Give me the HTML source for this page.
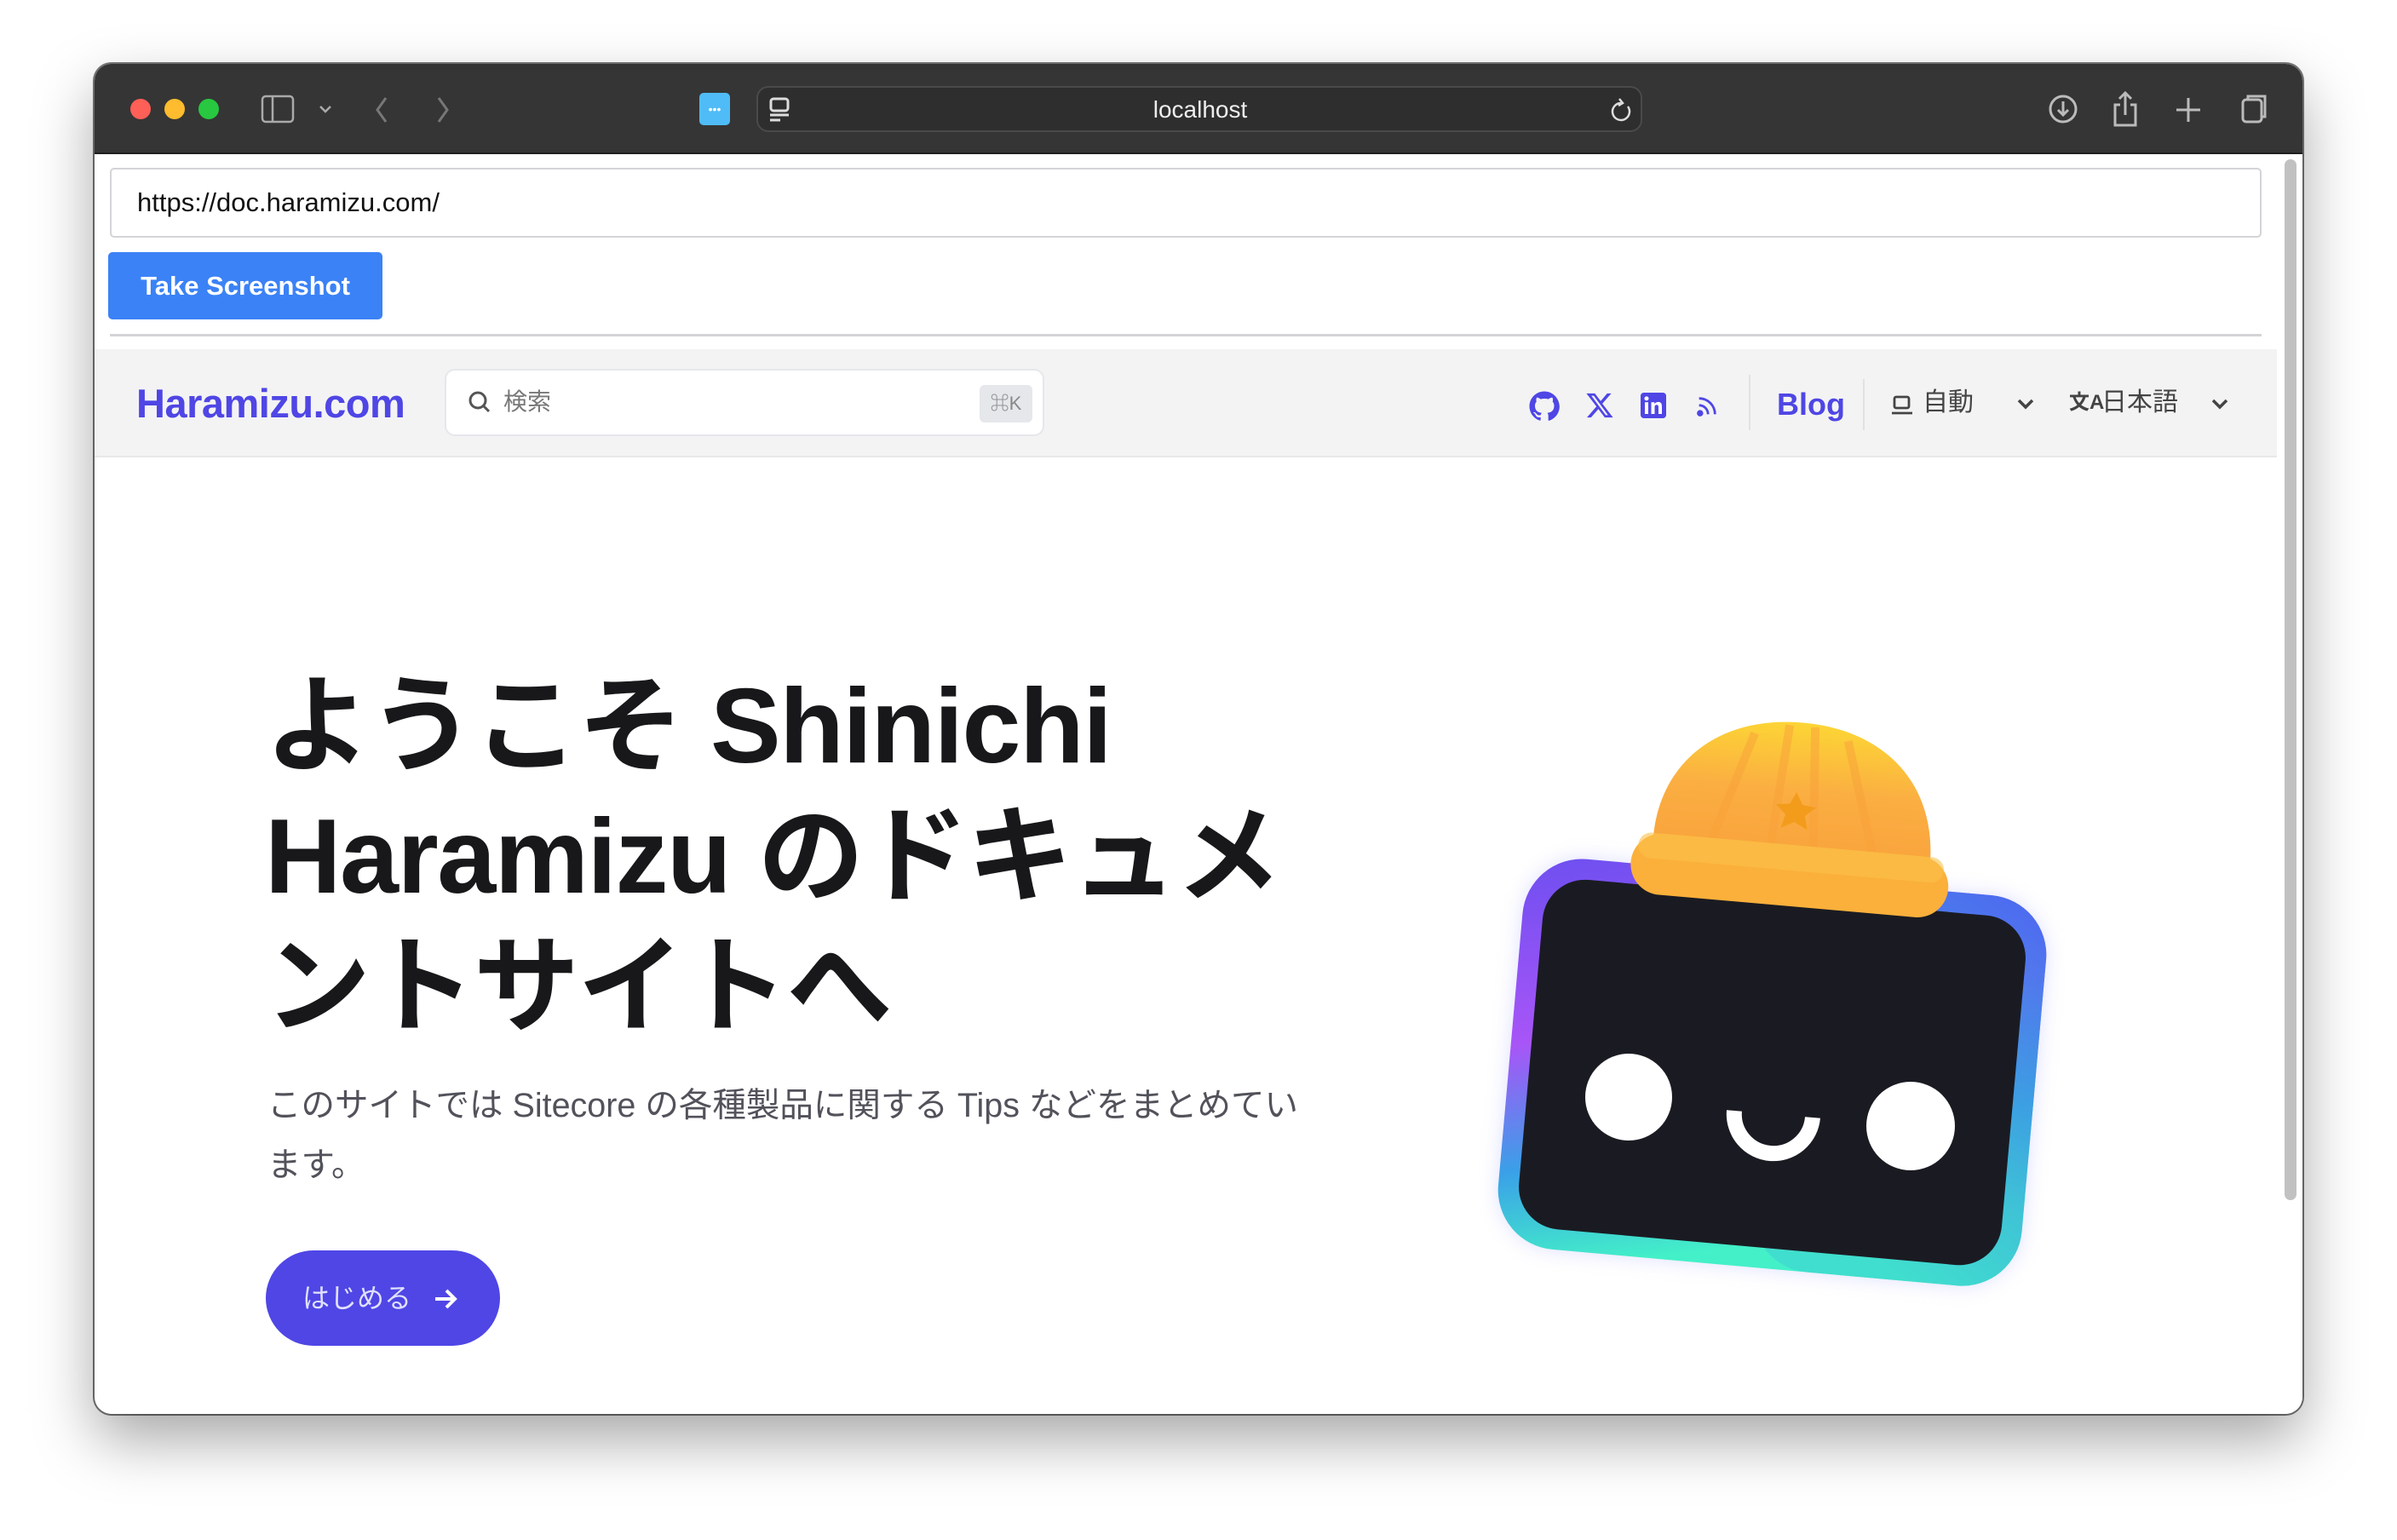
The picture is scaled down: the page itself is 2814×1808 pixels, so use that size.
<!DOCTYPE html>
<html><head><meta charset="utf-8"><style>
*{margin:0;padding:0;box-sizing:border-box}
body{width:2814px;height:1808px;background:#fff;position:relative;overflow:hidden;font-family:"Liberation Sans","Noto Sans CJK JP",sans-serif}
.abs{position:absolute}
#win{left:111px;top:75px;width:2592px;height:1585px;border-radius:20px;background:#fff;box-shadow:0 30px 70px rgba(0,0,0,.35),0 0 0 2px #777;overflow:hidden}
#tb{left:0;top:0;width:2592px;height:106px;background:#353535;border-bottom:2px solid #1e1e1e}
.tl{width:24px;height:24px;border-radius:50%;top:41px}
.jp{font-family:"Liberation Sans","Noto Sans CJK JP",sans-serif}
</style></head><body>
<div id="win" class="abs">
 <div id="tb" class="abs">
  <div class="abs tl" style="left:42px;background:#fe5f57"></div>
  <div class="abs tl" style="left:82px;background:#febc2e"></div>
  <div class="abs tl" style="left:122px;background:#28c840"></div>
  <svg class="abs" style="left:195px;top:36px" width="120" height="36" viewBox="0 0 120 36" fill="none" stroke="#aaa" stroke-width="2.5">
   <rect x="2" y="2" width="36" height="30" rx="4"/><line x1="14" y1="2" x2="14" y2="32"/>
   <path d="M70 14l6 6 6-6"/>
  </svg>
  <svg class="abs" style="left:320px;top:36px" width="100" height="36" fill="none" stroke="#777" stroke-width="3"><path d="M22 4L12 18l10 14"/><path d="M84 4l10 14-10 14"/></svg>
  <div class="abs" style="left:710px;top:34px;width:36px;height:38px;background:#4fbcf7;border-radius:5px;color:#fff;font-size:14px;text-align:center;line-height:38px">•••</div>
  <div class="abs" style="left:777px;top:26px;width:1040px;height:54px;border:2px solid #4a4a4a;border-radius:14px;background:#2e2e2e"></div>
  <svg class="abs" style="left:790px;top:38px" width="30" height="32" fill="none" stroke="#ddd" stroke-width="3"><rect x="4" y="3" width="20" height="14" rx="3"/><line x1="3" y1="22" x2="25" y2="22"/><line x1="3" y1="28" x2="15" y2="28"/></svg>
  <div class="abs" style="left:1198px;top:38px;width:200px;text-align:center;color:#eee;font-size:28px;line-height:32px">localhost</div>
  <svg class="abs" style="left:1778px;top:38px" width="30" height="32" fill="none" stroke="#ddd" stroke-width="2.5"><path d="M22 12a10 10 0 1 1-8-4"/><path d="M12 3l4 5-5 3"/></svg>
  <svg class="abs" style="left:2290px;top:30px" width="280" height="46" fill="none" stroke="#bbb" stroke-width="3">
   <circle cx="21" cy="23" r="15"/><path d="M21 14v16M15 24l6 6 6-6"/>
   <path d="M88 18h-6v24h24V18h-6M94 30V4M87 11l7-7 7 7"/>
   <path d="M168 10v28M154 24h28"/>
   <rect x="232" y="12" width="22" height="26" rx="4"/><path d="M238 12V8h20v24h-4"/>
  </svg>
 </div>
 <div class="abs" style="left:18px;top:122px;width:2526px;height:82px;border:2px solid #d4d4d8;border-radius:5px"></div>
 <div class="abs" style="left:50px;top:143px;font-size:31px;color:#111;line-height:40px">https://doc.haramizu.com/</div>
 <div class="abs" style="left:16px;top:221px;width:322px;height:79px;background:#3b82f6;border-radius:5px;color:#fff;font-size:31px;font-weight:bold;text-align:center;line-height:79px">Take Screenshot</div>
 <div class="abs" style="left:18px;top:317px;width:2526px;height:3px;background:#d4d4d8"></div>
 <div class="abs" style="left:2570px;top:110px;width:22px;height:1475px;background:#fff"></div>
 <div class="abs" style="left:2571px;top:112px;width:14px;height:1222px;background:#c1c1c1;border-radius:7px"></div>
 <div class="abs" style="left:0;top:335px;width:2562px;height:127px;background:#f3f3f4;border-bottom:2px solid #e8e8ea"></div>
 <div class="abs" style="left:49px;top:371px;font-size:47px;font-weight:bold;color:#4f46e5;line-height:56px;letter-spacing:-0.5px">Haramizu.com</div>
 <div class="abs" style="left:411px;top:358px;width:704px;height:79px;background:#fff;border:2px solid #e5e7eb;border-radius:12px"></div>
 <svg class="abs" style="left:437px;top:382px" width="30" height="32" fill="none" stroke="#555" stroke-width="3"><circle cx="13" cy="13" r="9"/><path d="M20 20l6 6"/></svg>
 <div class="abs jp" style="left:480px;top:380px;font-size:28px;color:#777;line-height:34px">検索</div>
 <div class="abs" style="left:1039px;top:377px;width:62px;height:44px;background:#e5e7eb;border-radius:6px;color:#888;font-size:22px;text-align:center;line-height:44px">⌘K</div>
 <svg class="abs" style="left:1682px;top:382px" width="40" height="40" viewBox="0 0 24 24" fill="#4f46e5"><path d="M12 1.5C6.2 1.5 1.5 6.2 1.5 12c0 4.6 3 8.6 7.2 10 .5.1.7-.2.7-.5v-1.8c-2.9.6-3.5-1.4-3.5-1.4-.5-1.2-1.2-1.5-1.2-1.5-1-.7.1-.7.1-.7 1 .1 1.6 1.1 1.6 1.1.9 1.6 2.5 1.1 3.1.9.1-.7.4-1.1.7-1.4-2.3-.3-4.8-1.2-4.8-5.2 0-1.100.4-2.1 1.1-2.8-.1-.3-.5-1.4.1-2.8 0 0 .9-.3 2.9 1.1a10 10 0 0 1 5.3 0c2-1.4 2.9-1.1 2.9-1.1.6 1.4.2 2.5.1 2.8.7.7 1.1 1.7 1.1 2.8 0 4-2.5 4.9-4.8 5.2.4.3.7 1 .7 2v2.9c0 .3.2.6.7.5 4.2-1.4 7.2-5.4 7.2-10C22.5 6.2 17.8 1.5 12 1.5z"/></svg>
 <svg class="abs" style="left:1750px;top:384px" width="34" height="34" viewBox="0 0 24 24" fill="#4f46e5"><path d="M18.2 2h3.4l-7.4 8.5L23 22h-6.8l-5.3-7-6.1 7H1.4l7.9-9.1L1 2h7l4.8 6.4L18.2 2zm-1.2 18h1.9L7.1 4H5.1l11.9 16z"/></svg>
 <svg class="abs" style="left:1815px;top:386px" width="30" height="30" viewBox="0 0 24 24"><rect width="24" height="24" rx="3" fill="#4f46e5"/><rect x="4" y="9" width="3.2" height="11" fill="#fff"/><circle cx="5.6" cy="5.5" r="2" fill="#fff"/><path d="M10 9h3v1.6c.6-1 1.8-1.9 3.5-1.9 3 0 3.5 2 3.5 4.5V20h-3.2v-6c0-1.4-.2-2.6-1.7-2.6s-1.900 1.1-1.9 2.6v6H10z" fill="#fff"/></svg>
 <svg class="abs" style="left:1879px;top:387px" width="28" height="30" viewBox="0 0 24 24" fill="none" stroke="#4f46e5" stroke-width="2.4"><circle cx="5" cy="19" r="2" fill="#4f46e5"/><path d="M4 11a9 9 0 0 1 9 9M4 4a16 16 0 0 1 16 16"/></svg>
 <div class="abs" style="left:1942px;top:365px;width:2px;height:65px;background:#e2e2e4"></div>
 <div class="abs" style="left:1975px;top:378px;font-size:36px;font-weight:bold;color:#4f46e5;line-height:44px">Blog</div>
 <div class="abs" style="left:2076px;top:370px;width:2px;height:60px;background:#e2e2e4"></div>
 <svg class="abs" style="left:2108px;top:388px" width="28" height="26" fill="none" stroke="#444" stroke-width="2.8"><rect x="5" y="3" width="17" height="13" rx="2"/><path d="M2 22h24"/></svg>
 <div class="abs jp" style="left:2146px;top:378px;font-size:30px;color:#444;line-height:40px">自動</div>
 <svg class="abs" style="left:2256px;top:390px" width="22" height="20" fill="none" stroke="#444" stroke-width="3.5"><path d="M3 5l8 8 8-8"/></svg>
 <div class="abs jp" style="left:2318px;top:380px;font-size:24px;color:#444;line-height:36px;font-weight:bold">文A</div>
 <div class="abs jp" style="left:2356px;top:378px;font-size:30px;color:#444;line-height:40px">日本語</div>
 <svg class="abs" style="left:2484px;top:390px" width="22" height="20" fill="none" stroke="#444" stroke-width="3.5"><path d="M3 5l8 8 8-8"/></svg>
 <div class="abs jp" style="left:200px;top:702px;font-size:124px;font-weight:bold;color:#18181b;line-height:153px;white-space:nowrap;letter-spacing:-1.5px">ようこそ Shinichi<br>Haramizu のドキュメ<br>ントサイトへ</div>
 <div class="abs jp" style="left:203px;top:1188px;font-size:39.5px;color:#52525b;line-height:70px;white-space:nowrap">このサイトでは Sitecore の各種製品に関する Tips などをまとめてい<br>ます。</div>
 <div class="abs jp" style="left:201px;top:1393px;width:275px;height:112px;border-radius:56px;background:#4f46e5;color:#e0e0ff;font-size:32px;line-height:112px;padding-left:43px">はじめる</div>
 <svg class="abs" style="left:398px;top:1437px" width="30" height="26" fill="none" stroke="#fff" stroke-width="4"><path d="M2 13h24M15 3l10 10-10 10"/></svg>
 <svg class="abs" style="left:1609px;top:745px" width="720" height="720" viewBox="0 0 720 720">
  <defs>
   <linearGradient id="fr" x1="0" y1="0" x2="0.3" y2="1"><stop offset="0" stop-color="#6d4ff0"/><stop offset=".45" stop-color="#a855f7"/><stop offset=".75" stop-color="#3aa0e8"/><stop offset="1" stop-color="#43f0c8"/></linearGradient>
   <linearGradient id="fr2" x1="1" y1="0" x2="0.6" y2="1"><stop offset="0" stop-color="#3b6cf0"/><stop offset="1" stop-color="#3fd9d0"/></linearGradient>
   <linearGradient id="hat" x1="0" y1="0" x2="0" y2="1"><stop offset="0" stop-color="#fcd535"/><stop offset=".5" stop-color="#fbae42"/><stop offset="1" stop-color="#f8a33c"/></linearGradient>
   <filter id="gl"><feGaussianBlur stdDeviation="12"/></filter>
  </defs>
  <g transform="rotate(5.1 360 439)">
   <rect x="52" y="209" width="617" height="460" rx="70" fill="#a5a8ff" opacity=".35" filter="url(#gl)"/>
   <rect x="52" y="209" width="617" height="460" rx="70" fill="url(#fr)"/>
   <rect x="352" y="209" width="317" height="460" rx="70" fill="url(#fr2)" opacity=".8"/>
   <rect x="76" y="233" width="569" height="412" rx="50" fill="#1a1b22"/>
  </g>
  <circle cx="192" cy="468" r="51" fill="#fff"/>
  <circle cx="523" cy="502" r="52" fill="#fff"/>
  <path d="M316 484a41 41 0 0 0 92 8" fill="none" stroke="#fff" stroke-width="18"/>
  <g transform="rotate(5 385 160)">
   <path d="M222 185C218 95 280 28 385 28S552 95 548 190Z" fill="url(#hat)"/>
   <path d="M370 32l-10 140M400 32l10 140M330 45l-40 130M440 45l40 130" stroke="#f9a23a" stroke-width="10" opacity=".5"/>
   <path d="M385 110l8 14 16 2-12 11 4 16-16-8-15 8 4-16-12-11 16-2z" fill="#f39c1c"/>
   <rect x="198" y="172" width="374" height="72" rx="36" fill="#fbb03b"/>
   <rect x="205" y="172" width="360" height="30" rx="15" fill="#fcc24a" opacity=".6"/>
  </g>
 </svg>
</div>
</body></html>
